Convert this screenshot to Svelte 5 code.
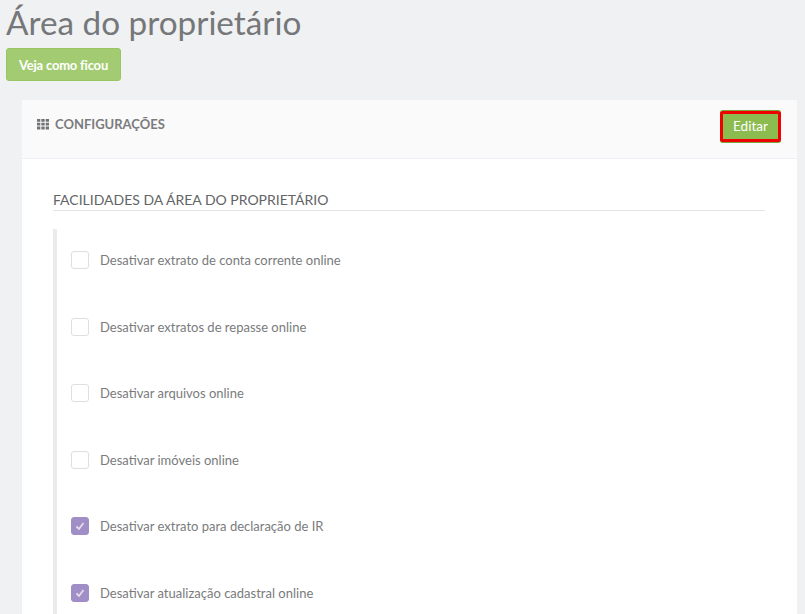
<script>
  const options = [
    { label: 'Desativar extrato de conta corrente online', checked: false },
    { label: 'Desativar extratos de repasse online', checked: false },
    { label: 'Desativar arquivos online', checked: false },
    { label: 'Desativar imóveis online', checked: false },
    { label: 'Desativar extrato para declaração de IR', checked: true },
    { label: 'Desativar atualização cadastral online', checked: true },
  ];
</script>

<div class="page">
  <h1>Área do proprietário</h1>
  <button class="preview-btn">Veja como ficou</button>

  <div class="panel">
    <div class="panel-head">
      <div class="panel-title">
        <svg class="grid-icon" width="12" height="12" viewBox="0 0 12 12">
          <path fill="#707274" d="M0 1h3.3v2.8H0zM4.350 1h3.3v2.8h-3.300zM8.700 1H12v2.800H8.700zM0 4.800h3.300v2.800H0zM4.350 4.800h3.300v2.800h-3.300zM8.700 4.800H12v2.800H8.700zM0 8.600h3.300v2.800H0zM4.350 8.600h3.300v2.800h-3.300zM8.700 8.600H12v2.800H8.700z" />
        </svg>
        <span>CONFIGURAÇÕES</span>
      </div>
      <button class="edit-btn">Editar</button>
    </div>

    <div class="panel-body">
      <h2>FACILIDADES DA ÁREA DO PROPRIETÁRIO</h2>
      <div class="options">
        {#each options as opt}
          <div class="option">
            <span class="box" class:checked={opt.checked}>
              {#if opt.checked}
                <svg width="10" height="10" viewBox="0 0 10 10">
                  <path d="M1.5 5.500 L4 8 L8.500 2" fill="none" stroke="#fff" stroke-opacity="0.7" stroke-width="1.8" />
                </svg>
              {/if}
            </span>
            <span class="label">{opt.label}</span>
          </div>
        {/each}
      </div>
    </div>
  </div>
</div>

<style>
  :global(body) {
    margin: 0;
    background: #f0f1f3;
    font-family: Lato, "Liberation Sans", sans-serif;
    color: #676a6c;
  }

  .page {
    height: 614px;
    overflow: hidden;
    padding: 0 8px 0 6px;
    box-sizing: border-box;
  }

  h1 {
    margin: 0;
    font-size: 33.3px;
    line-height: 44px;
    font-weight: 400;
    color: #757779;
  }

  .preview-btn {
    display: block;
    margin-top: 4px;
    height: 33px;
    width: 115px;
    padding: 0;
    background: #a3cc72;
    border: 1px solid #97c662;
    border-radius: 3px;
    color: #fff;
    font-family: inherit;
    font-size: 13px;
    font-weight: 700;
    letter-spacing: -0.2px;
  }

  .panel {
    margin: 19px 0 0 16px;
    background: #fff;
  }

  .panel-head {
    height: 58px;
    padding: 0 16px 0 15px;
    display: flex;
    justify-content: space-between;
    background: #fafafb;
    border-bottom: 1px solid #eef0f5;
  }

  .panel-title {
    display: flex;
    align-items: center;
    gap: 6px;
    height: 47px;
    font-size: 13px;
    font-weight: 700;
    color: #7a7c7e;
  }

  .edit-btn {
    margin-top: 10px;
    width: 61px;
    height: 33px;
    padding: 0 0 2px;
    background: #8cbb50;
    border: none;
    border-top: 1px solid #7aa63c;
    border-bottom: 1px solid #7aa63c;
    border-radius: 3px;
    box-shadow: inset 0 0 0 3px #f00000;
    color: #fff;
    font-family: inherit;
    font-size: 13.5px;
    font-weight: 400;
  }

  .panel-body {
    padding: 31px 32px 40px 31px;
  }

  h2 {
    margin: 0;
    padding-bottom: 1px;
    border-bottom: 1px solid #e4e4e4;
    font-size: 14px;
    line-height: 19px;
    font-weight: 400;
    color: #626466;
  }

  .options {
    margin-top: 18px;
    border-left: 4px solid #ebebeb;
    padding: 22px 0 20px 14px;
  }

  .option {
    display: flex;
    align-items: center;
    gap: 11px;
    height: 18px;
    margin-bottom: 48.5px;
  }

  .box {
    width: 18px;
    height: 18px;
    box-sizing: border-box;
    display: flex;
    align-items: center;
    justify-content: center;
    border: 1px solid #dcdfe3;
    border-radius: 3px;
    background: #fff;
  }

  .box.checked {
    background: #a08fc6;
    border-color: #a08fc6;
  }

  .label {
    font-size: 13px;
    color: #797b7d;
  }
</style>
